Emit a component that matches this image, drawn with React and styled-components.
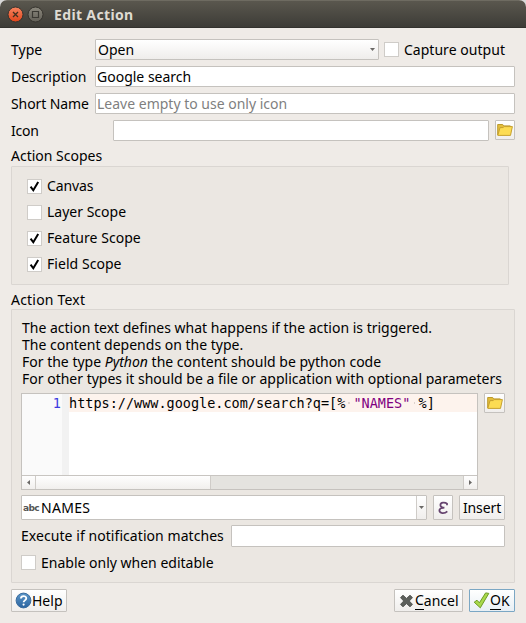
import React from 'react';
import styled, { createGlobalStyle, css } from 'styled-components';

const Global = createGlobalStyle`
  *, *::before, *::after { box-sizing: border-box; }
  body { margin: 0; background: #d8d8d8; }
`;

const edge = '#c5c2be';

const Window = styled.main`
  width: 526px;
  height: 623px;
  display: flex;
  flex-direction: column;
  background: #efebe7;
  border-radius: 7px 7px 0 0;
  overflow: hidden;
  font: 14px/18px "Noto Sans", "Open Sans", sans-serif;
  color: #000;
`;

const TitleBar = styled.header`
  height: 28px;
  flex: none;
  display: flex;
  align-items: center;
  gap: 3px;
  padding: 1px 7px 0;
  background: linear-gradient(#5a574e, #3d3c37);
  border-top: 1px solid #6e6b61;
  border-bottom: 1px solid #33322e;
`;

const Title = styled.h1`
  margin: 0 0 0 7px;
  font-size: 14px;
  line-height: 20px;
  font-weight: 700;
  letter-spacing: 0.35px;
  color: #dfdbd2;
`;

const Body = styled.div`
  flex: 1;
  display: flex;
  flex-direction: column;
  padding: 11px;
`;

const Form = styled.div`
  display: flex;
  flex-direction: column;
  gap: 6px;
`;

const Row = styled.div`
  display: flex;
  align-items: center;
  height: ${(p) => p.$h || 21}px;
`;

const Label = styled.span`
  flex: none;
  width: ${(p) => (p.$w ? `${p.$w}px` : 'auto')};
  letter-spacing: ${(p) => p.$ls || 0}px;
  white-space: nowrap;
`;

const Field = styled.div`
  flex: 1;
  height: 100%;
  display: flex;
  align-items: center;
  padding-left: ${(p) => p.$pad ?? 1}px;
  background: #fff;
  border: 1px solid ${edge};
  border-radius: 1px;
  white-space: nowrap;
  color: ${(p) => (p.$hint ? '#7f7f7f' : '#000')};
`;

const Select = styled(Field)`
  background: linear-gradient(#fff, #efedeb);
  justify-content: space-between;
  padding-right: 3px;
`;

const ComboField = styled(Field)`
  height: 25px;
`;

const buttonFace = css`
  background: linear-gradient(#fff, ${(p) => (p.$primary ? '#e8eff4' : '#f0eeec')});
  border: 1px solid ${(p) => (p.$primary ? '#7ba7c4' : edge)};
  border-radius: 1px;
  font: inherit;
  color: inherit;
  white-space: nowrap;
`;

const ToolButton = styled.button`
  ${buttonFace}
  flex: none;
  width: ${(p) => p.$w || 20}px;
  height: ${(p) => p.$h || 20}px;
  margin: 0 0 0 6px;
  padding: 0;
  display: flex;
  align-items: center;
  justify-content: center;
  align-self: ${(p) => (p.$h ? 'center' : 'flex-start')};
  letter-spacing: ${(p) => p.$ls || 0}px;
`;

const DialogButton = styled.button`
  ${buttonFace}
  width: ${(p) => p.$w}px;
  height: 23px;
  margin: 0 0 0 ${(p) => p.$ml || 0}px;
  padding: 0 0 0 3px;
  display: flex;
  align-items: center;
`;

const Mnemonic = styled.span`
  display: inline-block;
  line-height: 16px;
  height: 18px;
  border-bottom: 1px solid #000;
`;

const Box = styled.span`
  flex: none;
  width: 15px;
  height: 15px;
  margin-right: 5px;
  display: flex;
  background: #fff;
  border: 1px solid #cfccc8;
`;

const CheckRow = styled.label`
  display: flex;
  align-items: center;
  height: ${(p) => p.$h || 26}px;
  margin: 0 ${(p) => p.$mr || 0}px 0 ${(p) => p.$ml || 0}px;
  letter-spacing: ${(p) => p.$ls || 0}px;
  white-space: nowrap;
`;

const GroupTitle = styled.h2`
  margin: 0;
  height: ${(p) => p.$h}px;
  padding-top: 6px;
  font-size: 14px;
  line-height: 18px;
  font-weight: 400;
  letter-spacing: ${(p) => p.$ls || 0}px;
`;

const Group = styled.section`
  display: flex;
  flex-direction: column;
  height: ${(p) => p.$h}px;
  width: ${(p) => p.$w}px;
  padding: ${(p) => p.$pad};
  background: #ebe7e2;
  border: 1px solid #dad6d2;
  border-radius: 1px;
`;

const Explanation = styled.p`
  margin: 0 0 6px;
  padding-left: 1px;
  line-height: 17px;
  white-space: nowrap;
`;

const EditorRow = styled.div`
  display: flex;
`;

const Editor = styled.div`
  width: 458px;
  height: 97px;
  display: flex;
  flex-direction: column;
  background: #fff;
  border: 1px solid ${edge};
`;

const Code = styled.div`
  flex: 1;
  display: flex;
  font: 13.5px/18px "DejaVu Sans Mono", monospace;
`;

const Gutter = styled.div`
  width: 47px;
  padding-right: 8px;
  text-align: right;
  color: #3c3ce0;
  background: linear-gradient(90deg, #fafafa 40px, #f2f2f2 40px);
`;

const Line = styled.div`
  flex: 1;
  height: 18px;
  background: #fdf3ed;
  white-space: pre;
  overflow: hidden;
`;

const Str = styled.span`
  color: #7f007f;
`;

const Gap = styled.span`
  background: radial-gradient(circle, #ddd2cc 0.7px, transparent 0.9px);
`;

const ScrollBar = styled.div`
  height: 14px;
  display: flex;
  background: #e4e3df;
  border-top: 1px solid #c8c5c1;
`;

const ScrollPart = styled.div`
  width: ${(p) => p.$w}px;
  margin-left: ${(p) => (p.$end ? 'auto' : 0)};
  display: flex;
  align-items: center;
  justify-content: center;
  background: linear-gradient(#fefefe, #f1efed);
  border: 0 solid #cfccc8;
  border-right-width: ${(p) => (p.$end ? 0 : 1)}px;
  border-left-width: ${(p) => (p.$end ? 1 : 0)}px;
`;

const Drop = styled.span`
  height: 100%;
  width: 10px;
  margin-left: auto;
  display: flex;
  align-items: center;
  justify-content: center;
  background: linear-gradient(#fff, #f0eeec);
  border-left: 1px solid #cfccc8;
`;

const TypeTag = styled.span`
  width: 18px;
  font: 700 9px/12px "DejaVu Sans", sans-serif;
  letter-spacing: -0.65px;
  color: #555;
`;

const Footer = styled.footer`
  display: flex;
  margin-top: 6px;
`;

const Arrow = ({ dir = 'down' }) => (
  <svg width="5" height="5" viewBox="0 0 5 5">
    <path
      fill="#6a6866"
      d={{ down: 'M0 1h5L2.5 4z', left: 'M4 0v5L1 2.5z', right: 'M1 0v5L4 2.5z' }[dir]}
    />
  </svg>
);

const Folder = () => (
  <svg width="16" height="14" viewBox="0 0 16 14">
    <path d="M.7 12V1.5h5l1 1.400h6.600V5" fill="#e3bd3c" stroke="#bc9a2d" />
    <path d="M.8 12.400 3 4.600h3.200l1-1h8.200l-1.900 8.800z" fill="#fcdc53" stroke="#c6a12f" />
  </svg>
);

const Tick = () => (
  <svg width="13" height="13" viewBox="0 0 13 13">
    <path d="M2.600 6.600 5.300 10.300 10.200 2" fill="none" stroke="#000" strokeWidth="2" />
  </svg>
);

const Check = ({ on, children, ...rest }) => (
  <CheckRow {...rest}>
    <Box>{on && <Tick />}</Box>
    {children}
  </CheckRow>
);

const CloseIcon = () => (
  <svg width="17" height="17" viewBox="0 0 17 17">
    <defs>
      <linearGradient id="close" x2="0" y2="1">
        <stop stopColor="#f78560" />
        <stop offset="1" stopColor="#e0441a" />
      </linearGradient>
    </defs>
    <circle cx="8.5" cy="8.5" r="7.5" fill="url(#close)" stroke="#35332d" />
    <path d="m6 6 5 5m0-5-5 5" stroke="#40301f" strokeWidth="1.3" />
  </svg>
);

const MaxIcon = () => (
  <svg width="17" height="17" viewBox="0 0 17 17">
    <defs>
      <linearGradient id="max" x2="0" y2="1">
        <stop stopColor="#8b887d" />
        <stop offset="1" stopColor="#625f57" />
      </linearGradient>
    </defs>
    <circle cx="8.5" cy="8.5" r="7.5" fill="url(#max)" stroke="#35332d" />
    <path d="M5.5 5.5h6v6h-6z" fill="none" stroke="#3b3933" strokeWidth="1.200" />
  </svg>
);

const Epsilon = () => (
  <svg width="12" height="14" viewBox="0 0 12 14">
    <path
      d="M10 4.300V2.600C8.200 1.200 3.400 1 3.400 4c0 2 1.800 2.600 4 2.700C4.800 6.800 2.400 7.500 2.400 9.600c0 3 5.200 3.300 7.900.7"
      fill="none"
      stroke="#66446f"
      strokeWidth="1.8"
    />
  </svg>
);

const HelpIcon = () => (
  <svg width="17" height="17" viewBox="0 0 17 17">
    <defs>
      <linearGradient id="help" x2="0" y2="1">
        <stop stopColor="#5c96c8" />
        <stop offset="1" stopColor="#2b64a0" />
      </linearGradient>
    </defs>
    <circle cx="8.5" cy="8.5" r="7.4" fill="url(#help)" stroke="#3b6c9e" />
    <path d="M5.900 6.500c0-3.300 5.400-3.200 5.400-.2 0 2-2.700 2.100-2.700 4" fill="none" stroke="#fff" strokeWidth="1.800" />
    <circle cx="8.600" cy="12.600" r="1.100" fill="#fff" />
  </svg>
);

const CancelIcon = () => (
  <svg width="17" height="16" viewBox="0 0 17 16">
    <path
      d="M5 2.200 8.500 5.400 12 2.200l2.500 2.400L11.300 8l3.200 3.400-2.500 2.400-3.500-3.200L5 13.800l-2.500-2.400L5.700 8 2.500 4.600z"
      fill="#5d605c"
      stroke="#454744"
      strokeWidth=".8"
      strokeLinejoin="round"
    />
  </svg>
);

const OkIcon = () => (
  <svg width="17" height="17" viewBox="0 0 17 17">
    <path
      d="M1.200 10.200 4 8.200l2.400 2.600L12.600.9l3.200.5L7.300 15.800z"
      fill="#a9d94b"
      stroke="#6c9a24"
      strokeLinejoin="round"
    />
  </svg>
);

const Combo = ({ tag, children }) => (
  <ComboField>
    <TypeTag>{tag}</TypeTag>
    <Label $ls={0.3}>{children}</Label>
    <Drop><Arrow /></Drop>
  </ComboField>
);

export default function App() {
  return (
    <Window>
      <Global />
      <TitleBar>
        <CloseIcon />
        <MaxIcon />
        <Title>Edit Action</Title>
      </TitleBar>
      <Body>
        <Form>
          <Row>
            <Label $w={84}>Type</Label>
            <Select $pad={2}>
              Open
              <Arrow />
            </Select>
            <Check $ml={5} $mr={10} $h={21} $ls={0.04}>Capture output</Check>
          </Row>
          <Row>
            <Label $w={84}>Description</Label>
            <Field>Google search</Field>
          </Row>
          <Row>
            <Label $w={84} $ls={-0.1}>Short Name</Label>
            <Field $hint>Leave empty to use only icon</Field>
          </Row>
          <Row>
            <Label $w={102} $ls={-0.2}>Icon</Label>
            <Field />
            <ToolButton><Folder /></ToolButton>
          </Row>
        </Form>
        <GroupTitle $h={25}>Action Scopes</GroupTitle>
        <Group $w={498} $h={119} $pad="6px 15px">
          <Check on $ls={-0.1}>Canvas</Check>
          <Check>Layer Scope</Check>
          <Check on $ls={0.05}>Feature Scope</Check>
          <Check on $ls={0.05}>Field Scope</Check>
        </Group>
        <GroupTitle $h={24} $ls={0.2}>Action Text</GroupTitle>
        <Group $w={504} $h={274} $pad="9px 9px 0">
          <Explanation>
            The action text defines what happens if the action is triggered.
            <br />
            The content depends on the type.
            <br />
            For the type <em>Python</em> the content should be python code
            <br />
            For other types it should be a file or application with optional parameters
          </Explanation>
          <EditorRow>
            <Editor>
              <Code>
                <Gutter>1</Gutter>
                <Line>
                  https://www.google.com/search?q=[%<Gap> </Gap>
                  <Str>"NAMES"</Str>
                  <Gap> </Gap>%]
                </Line>
              </Code>
              <ScrollBar>
                <ScrollPart $w={14}><Arrow dir="left" /></ScrollPart>
                <ScrollPart $w={175} />
                <ScrollPart $w={14} $end><Arrow dir="right" /></ScrollPart>
              </ScrollBar>
            </Editor>
            <ToolButton $w={21}><Folder /></ToolButton>
          </EditorRow>
          <Row $h={35}>
            <Combo tag="abc">NAMES</Combo>
            <ToolButton $h={25}><Epsilon /></ToolButton>
            <ToolButton $w={46} $h={25} $ls={-0.1}>Insert</ToolButton>
          </Row>
          <Row $h={22}>
            <Label $w={210} $ls={0.06}>Execute if notification matches</Label>
            <Field />
          </Row>
          <Check $h={31}>Enable only when editable</Check>
        </Group>
        <Footer>
          <DialogButton $w={56}><HelpIcon />Help</DialogButton>
          <DialogButton $w={69} $ml={327}><CancelIcon /><Mnemonic>C</Mnemonic>ancel</DialogButton>
          <DialogButton $w={46} $ml={6} $primary><OkIcon /><Mnemonic>O</Mnemonic>K</DialogButton>
        </Footer>
      </Body>
    </Window>
  );
}
